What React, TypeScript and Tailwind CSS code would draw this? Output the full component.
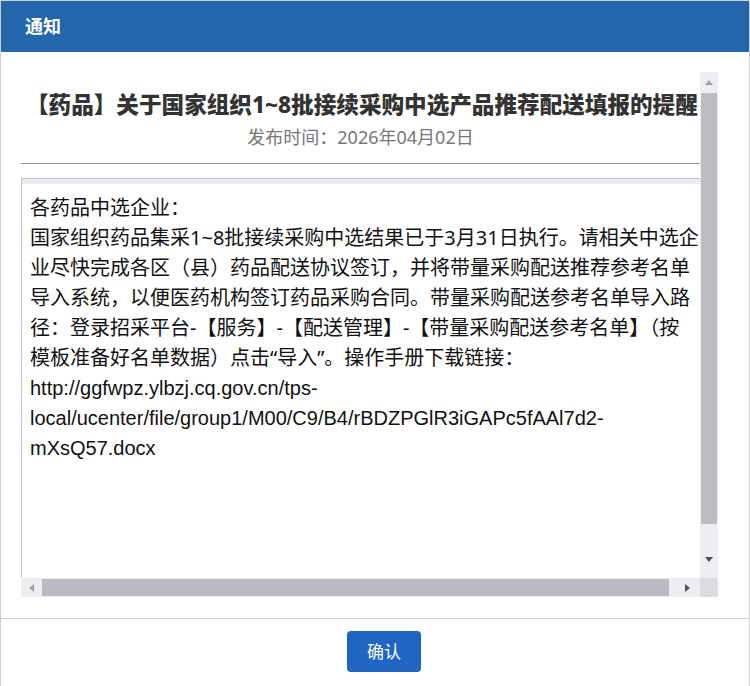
import React from 'react'

const bodyLines = [
  '各药品中选企业：',
  '国家组织药品集采1~8批接续采购中选结果已于3月31日执行。请相关中选企',
  '业尽快完成各区（县）药品配送协议签订，并将带量采购配送推荐参考名单',
  '导入系统，以便医药机构签订药品采购合同。带量采购配送参考名单导入路',
  '径：登录招采平台-【服务】-【配送管理】-【带量采购配送参考名单】（按',
  '模板准备好名单数据）点击“导入”。操作手册下载链接：',
]

const linkLines = [
  'http://ggfwpz.ylbzj.cq.gov.cn/tps-',
  'local/ucenter/file/group1/M00/C9/B4/rBDZPGlR3iGAPc5fAAl7d2-',
  'mXsQ57.docx',
]

function Arrow({ dir, dark }: { dir: 'up' | 'down' | 'left' | 'right'; dark?: boolean }) {
  const points = {
    up: '0,5 4,0 8,5',
    down: '0,0 8,0 4,5',
    left: '5,0 5,8 0,4',
    right: '0,0 0,8 5,4',
  }[dir]
  const vertical = dir === 'up' || dir === 'down'
  return (
    <svg width={vertical ? 8 : 5} height={vertical ? 5 : 8} viewBox={vertical ? '0 0 8 5' : '0 0 5 8'}>
      <polygon points={points} fill={dark ? '#505050' : '#a3a3a3'} />
    </svg>
  )
}

export default function App() {
  return (
    <div
      className="w-[750px] h-[686px] bg-white border-x border-[#cfcfcf] flex flex-col"
      style={{ fontFamily: '"Noto Sans", "Noto Sans CJK SC", sans-serif' }}
    >
      {/* Header */}
      <div className="h-[52px] shrink-0 bg-[#2466ab] border-t border-[#d0d0d0] flex items-center pl-[24px]">
        <span className="text-white text-[18px] font-bold">通知</span>
      </div>

      {/* Body */}
      <div className="flex-1 pt-5 pl-[20px]">
        <div className="grid grid-cols-[679px_18px] grid-rows-[506px_19px]">
          {/* Scroll content */}
          <div className="overflow-hidden flex flex-col">
            <div className="pt-[17px] pl-[5px] whitespace-nowrap text-[22.6px] leading-[32px] font-extrabold text-[#333]">
              【药品】关于国家组织1~8批接续采购中选产品推荐配送填报的提醒
            </div>
            <div className="mt-[3px] text-center text-[18px] leading-[26px] text-[#777]">
              发布时间：2026年04月02日
            </div>
            <div className="mt-[13px] h-px bg-[#9a9a9a]" />
            <div className="mt-[14px] flex-1 border-l border-t border-[#c4bfc8]">
              <div className="h-[5px] bg-[#ececf0]" />
              <div className="pt-[9px] pl-2 text-[20px] leading-[30px] text-[#111]">
                {bodyLines.map((line, i) => (
                  <div key={i} className="whitespace-nowrap">
                    {line}
                  </div>
                ))}
                {linkLines.map((line, i) => (
                  <div key={i} className="whitespace-nowrap font-['Liberation_Sans',sans-serif]">
                    {line}
                  </div>
                ))}
              </div>
            </div>
          </div>

          {/* Vertical scrollbar */}
          <div className="bg-[#eeeef2] flex flex-col items-center">
            <div className="h-[21px] flex items-center justify-center">
              <Arrow dir="up" />
            </div>
            <div className="w-[16px] h-[431px] bg-[#bdbcc0]" />
            <div className="flex-1" />
            <div className="h-[21px] flex items-start justify-center">
              <Arrow dir="down" dark />
            </div>
          </div>

          {/* Horizontal scrollbar */}
          <div className="bg-[#eeeef2] flex items-center">
            <div className="w-[21px] flex items-center justify-center">
              <Arrow dir="left" />
            </div>
            <div className="w-[627px] h-[17px] bg-[#bcb9c2]" />
            <div className="flex-1 flex items-center justify-center pl-[6px]">
              <Arrow dir="right" dark />
            </div>
          </div>
          <div className="bg-[#dcdce0]" />
        </div>
      </div>

      {/* Footer */}
      <div className="h-[68px] shrink-0 border-t border-[#cdd3cd] flex justify-center pt-3 pl-[18px]">
        <button className="w-[74px] h-[41px] rounded bg-[#2165c2] text-white text-[17px]">确认</button>
      </div>
    </div>
  )
}
